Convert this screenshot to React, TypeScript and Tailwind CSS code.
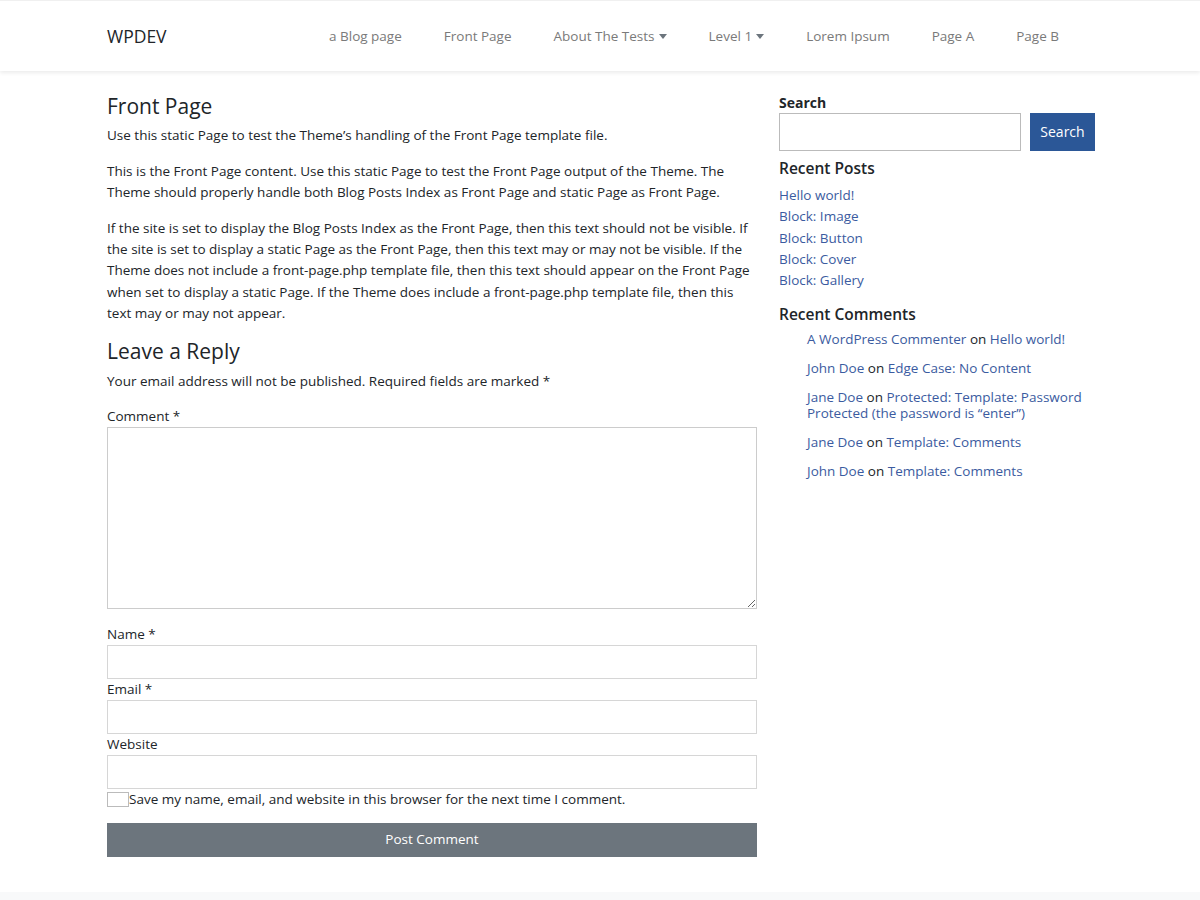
import React from "react";

const navItems = [
  { label: "a Blog page" },
  { label: "Front Page" },
  { label: "About The Tests", caret: true },
  { label: "Level 1", caret: true },
  { label: "Lorem Ipsum" },
  { label: "Page A" },
  { label: "Page B" },
];

const recentPosts = ["Hello world!", "Block: Image", "Block: Button", "Block: Cover", "Block: Gallery"];

const recentComments = [
  { author: "A WordPress Commenter", post: "Hello world!" },
  { author: "John Doe", post: "Edge Case: No Content" },
  { author: "Jane Doe", post: "Protected: Template: Password Protected (the password is “enter”)" },
  { author: "Jane Doe", post: "Template: Comments" },
  { author: "John Doe", post: "Template: Comments" },
];

function Caret() {
  return <span className="ml-[4px] inline-block align-middle border-x-[4px] border-x-transparent border-t-[5px] border-t-[#6c757d] mb-[3px]" />;
}

export default function App() {
  return (
    <div className="min-h-[900px] bg-white text-[#212529] text-[13.5px] leading-[21.3px] flex flex-col" style={{ fontFamily: "'Open Sans', 'Noto Sans', sans-serif" }}>
      {/* Header */}
      <header className="h-[71px] border-t border-[#f0f0f0] shadow-[0_2px_4px_rgba(0,0,0,0.08)] bg-white">
        <div className="pl-[107px] pr-[105px] pt-[2px] h-full flex items-center">
          <a className="text-[17.5px] text-[#212529]">WPDEV</a>
          <nav className="ml-auto flex items-center mr-[15px]">
            {navItems.map((n) => (
              <a key={n.label} className="px-[21px] text-[#7a7a7a] text-[13.5px] whitespace-nowrap">
                {n.label}
                {n.caret && <Caret />}
              </a>
            ))}
          </nav>
        </div>
      </header>

      {/* Body */}
      <div className="pl-[107px] pr-[105px] flex gap-[22px] pt-[21px] pb-[35px] flex-1">
        <main className="w-[651px]">
          <h1 className="text-[21px] leading-[28px] font-medium mb-[5px]">Front Page</h1>
          <p className="mb-[14.5px]">Use this static Page to test the Theme’s handling of the Front Page template file.</p>
          <p className="mb-[14.5px]">
            This is the Front Page content. Use this static Page to test the Front Page output of the Theme. The Theme should properly handle both Blog Posts Index as Front Page and static Page as Front Page.
          </p>
          <p className="mb-[13px]">
            If the site is set to display the Blog Posts Index as the Front Page, then this text should not be visible. If the site is set to display a static Page as the Front Page, then this text may or may not be visible. If the Theme does not include a front-page.php template file, then this text should appear on the Front Page when set to display a static Page. If the Theme does include a front-page.php template file, then this text may or may not appear.
          </p>

          <h2 className="text-[21px] leading-[28px] font-medium mb-[6px]">Leave a Reply</h2>
          <p className="mb-[12px]">Your email address will not be published. Required fields are marked *</p>

          <label className="block leading-[22px]">Comment *</label>
          <textarea className="block w-full h-[182px] border border-[#ccc] resize-y mb-[15px]" />

          <label className="block leading-[21px]">Name *</label>
          <input className="block w-full h-[34px] border border-[#d6d6d6]" />
          <label className="block leading-[21px]">Email *</label>
          <input className="block w-full h-[34px] border border-[#d6d6d6]" />
          <label className="block leading-[21px]">Website</label>
          <input className="block w-full h-[34px] border border-[#d6d6d6]" />

          <div className="flex items-center leading-[21px]">
            <span className="w-[22px] h-[15px] border border-[#bbb] bg-white" />
            <span>Save my name, email, and website in this browser for the next time I comment.</span>
          </div>

          <button className="mt-[13px] w-full h-[34px] bg-[#6c757d] text-white">Post Comment</button>
        </main>

        <aside className="flex-1">
          <div className="text-[14px] font-bold leading-[20px] mt-[1px] mb-[0px]">Search</div>
          <div className="flex gap-[9px] mb-[5px]">
            <input className="w-[242px] h-[38px] border border-[#bbb]" />
            <button className="w-[65px] h-[38px] bg-[#2b5797] text-white text-[14px]">Search</button>
          </div>

          <h2 className="text-[15.5px] leading-[24px] font-semibold mb-[5px]">Recent Posts</h2>
          <ul className="mb-[11px]">
            {recentPosts.map((p) => (
              <li key={p} className="leading-[21.25px]">
                <a className="text-[#3b5ba0]">{p}</a>
              </li>
            ))}
          </ul>

          <h2 className="text-[15.5px] leading-[24px] font-semibold mb-[5px]">Recent Comments</h2>
          <ul className="pl-[28px]">
            {recentComments.map((c, i) => (
              <li key={i} className="leading-[16px] mb-[13px]">
                <span className="text-[#3b5ba0]">{c.author}</span> on <a className="text-[#3b5ba0]">{c.post}</a>
              </li>
            ))}
          </ul>
        </aside>
      </div>

      <footer className="h-[8px] bg-[#f8f9fa]" />
    </div>
  );
}
